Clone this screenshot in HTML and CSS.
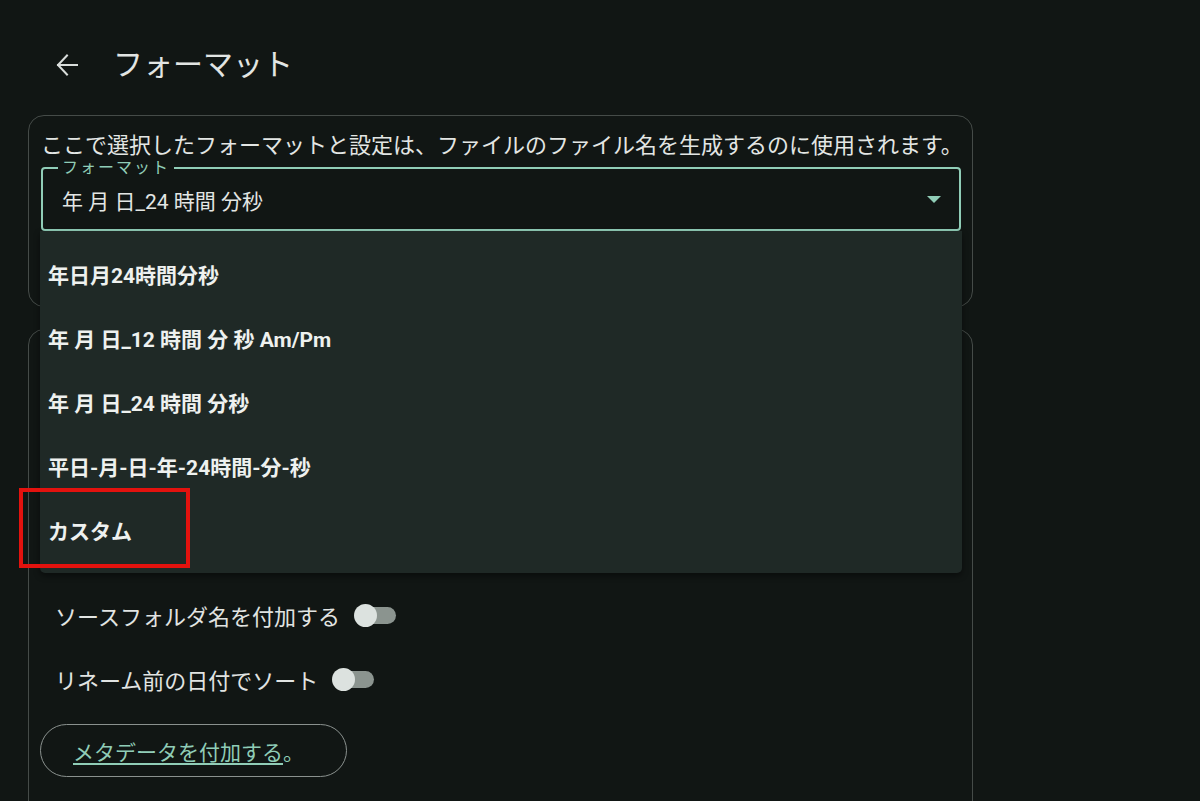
FILE: index.html
```html
<!DOCTYPE html>
<html lang="ja">
<head>
<meta charset="utf-8">
<title>フォーマット</title>
<link rel="stylesheet" href="styles.css">
</head>
<body>
<header class="topbar">
  <button class="back" aria-label="戻る">
    <svg width="24" height="24" viewBox="0 0 24 24" fill="none" stroke="#d9dddb" stroke-width="2" stroke-linecap="square">
      <path d="M2 12H21"/>
      <path d="M11 2.5L2 12l9 9.5"/>
    </svg>
  </button>
  <h1 class="title">フォーマット</h1>
</header>

<main class="content">
  <section class="card card-format">
    <p class="desc">ここで選択したフォーマットと設定は、ファイルのファイル名を生成するのに使用されます。</p>
    <div class="select-wrap">
      <fieldset class="select">
        <legend class="select-label">フォーマット</legend>
        <div class="select-row">
          <span class="select-value">年 月 日_24 時間 分秒</span>
          <span class="caret"></span>
        </div>
      </fieldset>
      <ul class="menu">
        <li class="menu-item">年日月24時間分秒</li>
        <li class="menu-item">年 月 日_12 時間 分 秒 Am/Pm</li>
        <li class="menu-item">年 月 日_24 時間 分秒</li>
        <li class="menu-item">平日-月-日-年-24時間-分-秒</li>
        <li class="menu-item">カスタム</li>
      </ul>
    </div>
  </section>

  <section class="card card-options">
    <div class="opt-row">
      <span class="opt-label">ソースフォルダ名を付加する</span>
      <span class="switch"></span>
    </div>
    <div class="opt-row">
      <span class="opt-label">リネーム前の日付でソート</span>
      <span class="switch"></span>
    </div>
    <button class="pill"><span class="pill-link">メタデータを付加する</span>。</button>
  </section>
</main>

<div class="highlight"></div>
</body>
</html>
```

FILE: styles.css
```css
* { box-sizing: border-box; }

html, body {
  margin: 0;
  padding: 0;
  background: #111614;
  height: 801px;
  overflow: hidden;
}

body {
  font-family: Roboto, "Noto Sans CJK JP", sans-serif;
  color: #e1e4e2;
  position: relative;
}

.topbar {
  display: flex;
  align-items: center;
  height: 50px;
  margin-top: 40px;
  padding-left: 56px;
}

.back {
  width: 24px;
  height: 24px;
  padding: 0;
  border: 0;
  background: none;
  display: flex;
  margin-right: 33px;
}

.title {
  margin: 0;
  font-size: 30px;
  font-weight: 400;
  color: #e2e5e3;
  line-height: 40px;
}

.content {
  padding: 25px 0 0 28px;
  width: 973px;
}

.card {
  border: 1px solid #454b48;
  border-radius: 16px;
}

.card-format {
  height: 192px;
  padding: 14px 11px 0 12px;
}

.desc {
  margin: 0;
  font-size: 22px;
  line-height: 32px;
  white-space: nowrap;
  color: #e3e6e4;
}

.select-wrap {
  position: relative;
  margin-top: -3px;
}

.select {
  margin: 0;
  border: 2px solid #90cdb7;
  border-radius: 4px;
  padding: 0 18px 0 19px;
  height: 72px;
}

.select-label {
  margin-left: -4px;
  padding: 0 4px;
  font-size: 16px;
  line-height: 18px;
  letter-spacing: 2px;
  color: #90cdb7;
}

.select-row {
  display: flex;
  align-items: center;
  justify-content: space-between;
  height: 45px;
}

.select-value {
  font-size: 21px;
  color: #e3e6e4;
}

.caret {
  width: 0;
  height: 0;
  border-left: 7px solid transparent;
  border-right: 7px solid transparent;
  border-top: 7px solid #90cdb7;
}

.menu {
  position: absolute;
  top: 100%;
  left: -1px;
  right: -1px;
  margin: 0;
  padding: 11px 0 11px;
  list-style: none;
  background: #1f2926;
  border-radius: 0 0 5px 5px;
  box-shadow: 0 3px 6px rgba(0, 0, 0, 0.45);
  z-index: 5;
}

.menu-item {
  height: 64px;
  display: flex;
  align-items: center;
  padding-left: 8px;
  font-size: 21px;
  font-weight: 700;
  color: #eef1ef;
}

.card-options {
  margin-top: 22px;
  padding: 253px 11px 60px 11px;
}

.opt-row {
  display: flex;
  align-items: center;
  height: 64px;
  padding-left: 15px;
}

.opt-label {
  font-size: 22px;
  color: #e1e4e2;
}

.switch {
  position: relative;
  width: 42px;
  height: 22px;
  margin-left: 14px;
}

.switch::before {
  content: "";
  position: absolute;
  left: 4px;
  right: 0;
  top: 3px;
  height: 17px;
  border-radius: 9px;
  background: #8b948f;
}

.switch::after {
  content: "";
  position: absolute;
  left: 0;
  top: 0;
  width: 23px;
  height: 23px;
  border-radius: 50%;
  background: #dce2df;
}

.pill {
  margin-top: 13px;
  height: 53px;
  width: 307px;
  border: 1px solid #8a918e;
  border-radius: 27px;
  background: transparent;
  text-align: left;
  padding: 0 0 0 32px;
  font-family: inherit;
  font-size: 21px;
  color: #90cdb7;
}

.pill-link {
  text-decoration: underline;
  text-underline-offset: 3px;
}

.highlight {
  position: absolute;
  left: 19px;
  top: 488px;
  width: 171px;
  height: 80px;
  border: 4px solid #e3120e;
  z-index: 10;
}
```
